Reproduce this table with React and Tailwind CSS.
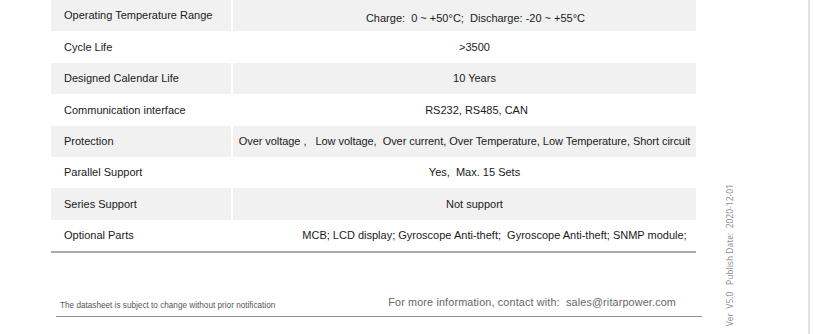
const rows = [
  { label: 'Operating Temperature Range', value: 'Charge:  0 ~ +50°C;  Discharge: -20 ~ +55°C', pad: 'pl-[22px] pt-[6px]' },
  { label: 'Cycle Life', value: '>3500', pad: 'pl-[20px]' },
  { label: 'Designed Calendar Life', value: '10 Years', pad: 'pl-[20px]' },
  { label: 'Communication interface', value: 'RS232, RS485, CAN', pad: 'pl-[24px]' },
  { label: 'Protection', value: 'Over voltage ,   Low voltage,  Over current, Over Temperature, Low Temperature, Short circuit', pad: 'pl-0 tracking-[-0.05px]' },
  { label: 'Parallel Support', value: 'Yes,  Max. 15 Sets', pad: 'pl-[20px]' },
  { label: 'Series Support', value: 'Not support', pad: 'pl-[20px]' },
  { label: 'Optional Parts', value: 'MCB; LCD display; Gyroscope Anti-theft;  Gyroscope Anti-theft; SNMP module;', pad: 'pl-[60px]' },
]

function SpecRow({ row, shaded }) {
  const bg = shaded ? 'bg-[#f1f1f1]' : 'bg-white'
  return (
    <div className="flex h-[31.4px] gap-[2px]">
      <div className={`${bg} w-[180px] flex items-center pl-[13px]`}>{row.label}</div>
      <div className={`${bg} flex-1 flex items-center justify-center whitespace-pre ${row.pad}`}>
        {row.value}
      </div>
    </div>
  )
}

export default function App() {
  return (
    <div className="w-[814px] h-[334px] bg-white flex font-['Liberation_Sans',Arial,sans-serif] text-[11px] text-[#1a1a1a] overflow-hidden">
      <div className="w-[709px] flex flex-col">
        <div className="ml-[51px] w-[645px] border-b-2 border-[#a9a9a9]">
          {rows.map((row, i) => (
            <SpecRow key={row.label} row={row} shaded={i % 2 === 0} />
          ))}
        </div>
        <div className="mt-[41px] ml-[56px] w-[646px] border-b border-[#8f8f8f] flex items-end pb-[3px]">
          <div className="pl-[4px] text-[8.2px] text-[#555] mb-[1px]">
            The datasheet is subject to change without prior notification
          </div>
          <div className="ml-auto mr-[26px] text-[10.8px] text-[#666] tracking-[0.15px] whitespace-pre mb-[3px]">
            For more information, contact with:  sales@ritarpower.com
          </div>
        </div>
      </div>
      <div className="flex-1 flex">
        <div className="w-[42px] flex items-end justify-center pb-[8px]">
          <div className="[writing-mode:vertical-rl] rotate-180 font-['Open_Sans',sans-serif] text-[8.5px] text-[#8a8a8a] whitespace-pre">
            Ver  V5.0   Publish Date:  2020-12-01
          </div>
        </div>
        <div className="ml-auto w-[2px] h-full bg-[#e2e2e2] mr-[4px]" />
      </div>
    </div>
  )
}
